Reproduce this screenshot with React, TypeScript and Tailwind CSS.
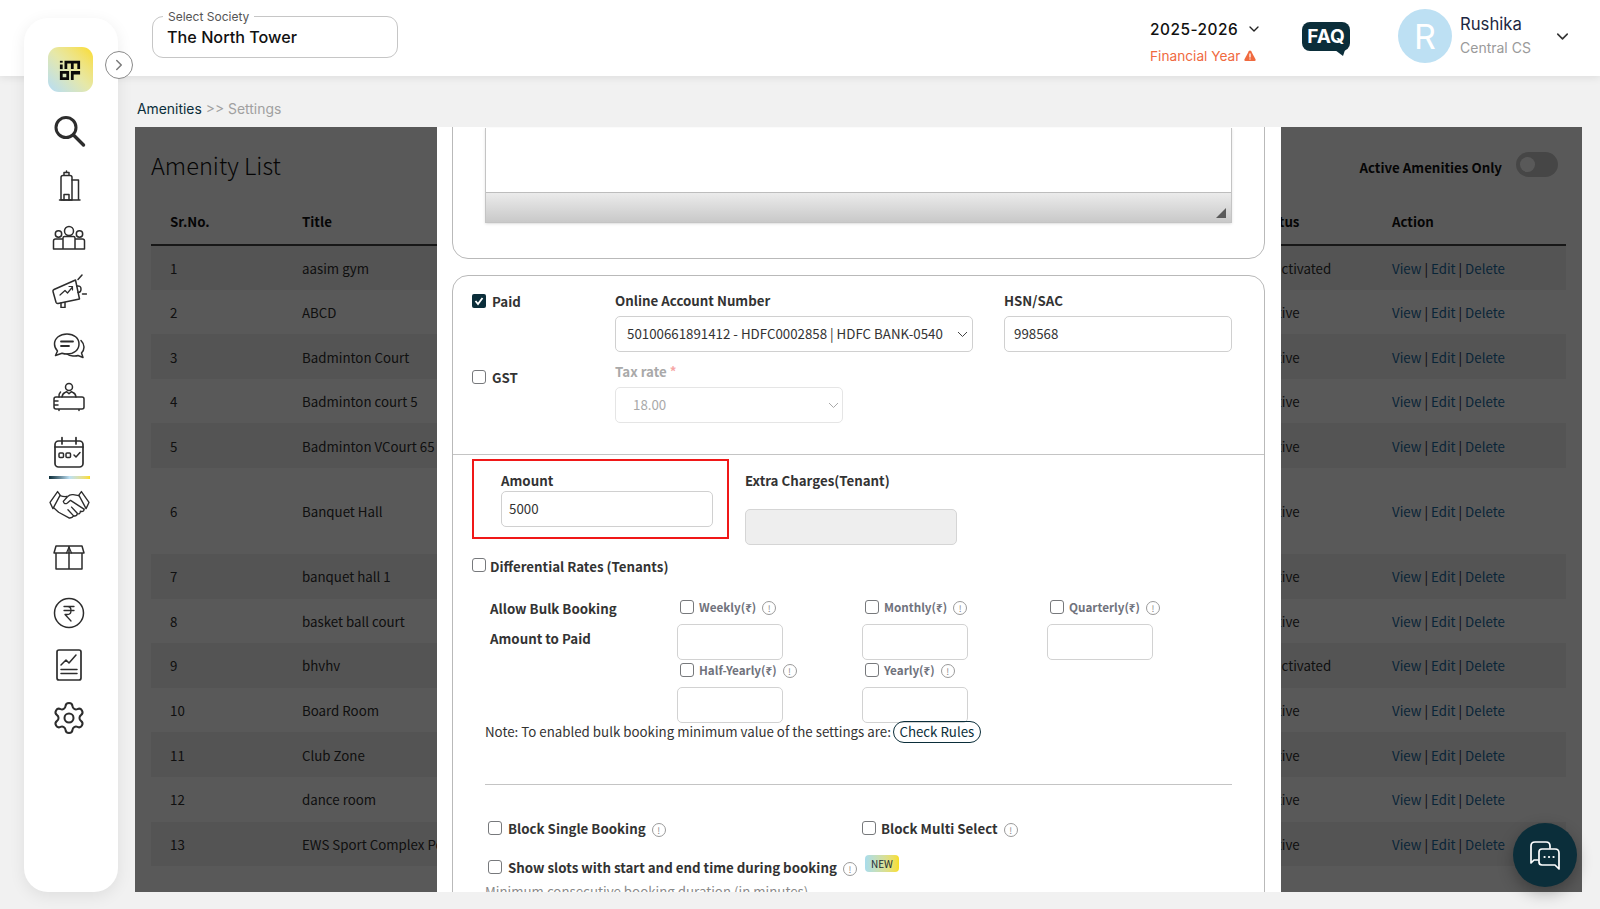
import React from "react";
import { ChevronDown, ChevronRight, Settings } from "lucide-react";

const noto = { fontFamily: '"Noto Sans CJK SC", "Noto Sans", sans-serif' };

const rows = [
  { id: 1, title: "aasim gym", status: "Inactivated" },
  { id: 2, title: "ABCD", status: "Active" },
  { id: 3, title: "Badminton Court", status: "Active" },
  { id: 4, title: "Badminton court 5", status: "Active" },
  { id: 5, title: "Badminton VCourt 65", status: "Active" },
  { id: 6, title: "Banquet Hall", status: "Active", tall: true },
  { id: 7, title: "banquet hall 1", status: "Active" },
  { id: 8, title: "basket ball court", status: "Active" },
  { id: 9, title: "bhvhv", status: "Inactivated" },
  { id: 10, title: "Board Room", status: "Active" },
  { id: 11, title: "Club Zone", status: "Active" },
  { id: 12, title: "dance room", status: "Active" },
  { id: 13, title: "EWS Sport Complex Pool", status: "Active" },
];

function Logo() {
  return (
    <div className="mr-[2px] flex h-[45px] w-[45px] items-center justify-center rounded-[11px] bg-gradient-to-tr from-[#b5dcf6] via-[#e6e8a8] to-[#fbdc14]">
      <svg width="22" height="22" viewBox="0 0 24 24" fill="#0a0a0a">
        <rect x="1" y="2" width="3" height="2" />
        <rect x="1" y="6" width="3" height="5" />
        <path d="M6 2h17v9h-3V5h-4v6h-3V5H9v6H6z" />
        <path d="M1 13h10v10H1zM4 16v4h4v-4z" fillRule="evenodd" />
        <path d="M13 13h10v4h-7v6h-3z" />
      </svg>
    </div>
  );
}

function NavSvg({ children, className = "" }: { children: React.ReactNode; className?: string }) {
  return (
    <svg className={className} width="36" height="36" viewBox="0 0 36 36" fill="none" stroke="#2d2d2d" strokeWidth="1.5" strokeLinecap="round" strokeLinejoin="round">
      {children}
    </svg>
  );
}

const navIcons: React.ReactNode[] = [
  <NavSvg key="search" className="-translate-y-[2px]">
    <circle cx="15" cy="14.5" r="10" strokeWidth="3" />
    <path d="M22.5 22l10 10" strokeWidth="3.4" />
  </NavSvg>,
  <NavSvg key="tower">
    <path d="M10 32V9.5q0-2 2-2h7q2 0 2 2V32z" />
    <path d="M21 12h6.5v20H21M8.5 32H29" />
    <path d="M13 7V4.5h5V7M15.5 4.500V3M13 32v-5.500h5V32" />
  </NavSvg>,
  <NavSvg key="people" className="translate-y-[1px]">
    <circle cx="18" cy="9" r="4.500" />
    <circle cx="7.500" cy="12" r="3.200" />
    <circle cx="28.500" cy="12" r="3.200" />
    <path d="M12 27v-11q0-1.500 1.500-1.500h9q1.500 0 1.500 1.500v11M2.500 27v-8q0-2 2-2H12M33.500 27v-8q0-2-2-2H24M2.500 27h31" />
  </NavSvg>,
  <NavSvg key="megaphone" className="-translate-y-[2px]">
    <path d="M3 17.500L24.500 8l4 19-21.500 4.500q-1.500.2-2-1.200L2 19.500q-.4-1.400 1-2z" />
    <path d="M9 23l5-4.500 2.500 2.500 5-6M18 14.500h3.500V18" strokeWidth="1.200" />
    <path d="M26 14q4-.5 4 3t-3 3.500M27 7.500L31 3M31.500 22h4" />
    <path d="M10 31v4.500h4V30.500" />
  </NavSvg>,
  <NavSvg key="chat" className="translate-y-[3px]">
    <path d="M16 4c7 0 12 4 12 10s-5 10-12 10q-2.500 0-5-.8L4.500 25.500l2-4.500Q3.500 18 3.500 14C3.500 8 9 4 16 4z" />
    <path d="M10 11.500h12M10 16h8" strokeWidth="1.800" />
    <path d="M30 10.500q3 3 3 6.500 0 3.500-2.500 6l1.500 4.500-5-2q-1.500.8-5 .5-4-.3-6-2" />
  </NavSvg>,
  <NavSvg key="desk" className="-translate-y-[1px]">
    <circle cx="18" cy="8" r="3.500" />
    <path d="M11 18q.5-3.500 3-4.500l1.800-.8 2.200 2 2.200-2 1.800.8q2.500 1 3 4.500M8 18q-.5-3 1.500-5" />
    <path d="M5 18h26q2 0 2 2v8q0 2-2 2H5q-2 0-2-2v-8q0-2 2-2zM3 22h4M3 26h4M8 30v1.500M28 30v1.500" />
  </NavSvg>,
  <NavSvg key="calendar" className="translate-y-[1px]">
    <rect x="4" y="7" width="28" height="26" rx="3.500" strokeWidth="1.700" />
    <path d="M11 3.500v6.500M25 3.500v6.500M4 13h28" strokeWidth="1.700" />
    <rect x="8" y="19" width="4.500" height="4.500" rx="1" />
    <rect x="15" y="19" width="4.500" height="4.500" rx="1" />
    <path d="M23 21l2 2 4-4.500" />
  </NavSvg>,
  <svg key="handshake" className="translate-y-[1px]" width="41" height="29" viewBox="0 0 39 28" fill="none" stroke="#2d2d2d" strokeWidth="1.300" strokeLinecap="round" strokeLinejoin="round">
    <path d="M0.700 12L8 1.500l2.500 3.500L3.500 18zM38.300 12L31 1.500l-2.500 3.500 7 13z" />
    <path d="M10.500 5.500q4 1.500 8 .5M28.500 5.500L23 4.500q-3-.5-5.500 2L13.500 11q1 3.500 4 1.500l3-2.500L33.500 18.500" />
    <path d="M4 17l5 4.500 10 5.500q3 .5 4.500-2M33.500 18.500q0 3-3.500 2q0 3-3 2.500q-.5 2.500-3.500 2" />
    <path d="M21.500 16.500l5.500 6M18 19l5.500 6" />
  </svg>,
  <NavSvg key="box">
    <path d="M3 14l2-7h26l2 7zM5 14v16h26V14M18 7v23" />
    <path d="M15.500 14L18 8l2.500 6" strokeWidth="1.200" />
  </NavSvg>,
  <NavSvg key="rupee" className="translate-y-[3px]">
    <circle cx="18" cy="18" r="14.500" />
    <path d="M13 11.500h10M13 15.500h10M13 11.500h3.500q3.500 0 3.500 4t-3.500 4H14l6 6.500" strokeWidth="1.300" />
  </NavSvg>,
  <NavSvg key="report" className="translate-y-[2px]">
    <rect x="6" y="3" width="24" height="30" rx="2" strokeWidth="1.700" />
    <path d="M10 18l5-5 3 3 7-8M10 22.500h16M10 26.500h16" />
  </NavSvg>,
  <Settings key="settings" className="translate-y-[2px]" size={36} color="#2d2d2d" strokeWidth={1.35} />,
];

function Info() {
  return (
    <span className="ml-[6px] mt-[2px] inline-flex h-[14px] w-[14px] shrink-0 items-center justify-center rounded-full border border-[#9a9a9a] text-[9px] font-normal leading-none text-[#8a8a8a]">
      !
    </span>
  );
}

function Box({ className = "" }: { className?: string }) {
  return <span className={`inline-block h-[14px] w-[14px] shrink-0 rounded-[3px] border border-[#77797c] bg-white ${className}`} />;
}

function Chevron({ color = "#444" }: { color?: string }) {
  return (
    <svg className="shrink-0" width="11" height="7" viewBox="0 0 11 7" fill="none" stroke={color} strokeWidth="1">
      <path d="M1 1l4.500 4.500L10 1" />
    </svg>
  );
}

function BulkCell({ label }: { label: string }) {
  return (
    <div className="w-[185px]">
      <div className="flex h-[20px] items-center pl-[3px] text-[11.700px] font-bold text-[#70727c]">
        <Box />
        <span className="ml-[5px]">{label}</span>
        <Info />
      </div>
      <div className="mt-[7px] h-[36px] w-[106px] rounded-[5px] border border-[#d2d2d2]" />
    </div>
  );
}

function AmenityTable() {
  return (
    <table className="w-full table-fixed border-collapse text-left text-[13.300px] text-[#2e2e2e]">
      <colgroup>
        <col className="w-[151px]" />
        <col className="w-[300px]" />
        <col />
        <col className="w-[134px]" />
        <col className="w-[174px]" />
      </colgroup>
      <thead>
        <tr className="h-[46px] border-b-2 border-[#444] text-[#111]">
          <th className="pl-[19px] font-bold">Sr.No.</th>
          <th className="font-bold">Title</th>
          <th className="font-bold">Description</th>
          <th className="font-bold">Status</th>
          <th className="font-bold">Action</th>
        </tr>
      </thead>
      <tbody className="[&_td]:pt-[2px]">
        {rows.map((r) => (
          <tr key={r.id} className={`${r.tall ? "h-[86px]" : "h-[44.600px]"} ${r.id % 2 === 1 ? "bg-[#f1f1f1]" : "bg-white"}`}>
            <td className="pl-[19px]">{r.id}</td>
            <td className="whitespace-nowrap">{r.title}</td>
            <td />
            <td className="pl-[4px]">{r.status}</td>
            <td className="text-[#1c6a9e]">
              View <span className="text-[#222]">|</span> Edit <span className="text-[#222]">|</span> Delete
            </td>
          </tr>
        ))}
      </tbody>
    </table>
  );
}

function SettingsModal() {
  return (
    <div className="absolute inset-0 flex justify-end bg-black/65 pr-[301px]">
      <div className="h-full w-[844px] overflow-hidden bg-white pl-[15px] pr-[16px] text-[13.300px] text-[#333]">
        {/* editor, already scrolled past its top */}
        <div className="-mt-[16px] h-[148px] rounded-[16px] border border-[#b9b9b9] px-[32px] pt-[16px]">
          <div className="flex h-[95px] flex-col border-x border-b border-[#c4c4c4] shadow-sm">
            <div className="flex-1 border-b border-[#bdbdbd]" />
            <div className="relative h-[29px] bg-gradient-to-b from-[#ebebeb] to-[#c9c9c9]">
              <svg className="absolute bottom-[4px] right-[5px]" width="10" height="10" viewBox="0 0 10 10">
                <path d="M10 0v10H0z" fill="#5a5a5a" />
              </svg>
            </div>
          </div>
        </div>

        <div className="mt-[16px] rounded-t-[16px] border border-[#b9b9b9] pb-[40px]">
          <div className="flex pl-[19px] pt-[15px]">
            <div className="mt-[1px] flex h-[20px] w-[143px] items-center">
              <span className="-mt-[3px] flex h-[14px] w-[14px] items-center justify-center rounded-[2px] bg-[#0b2e3a]">
                <svg width="10" height="10" viewBox="0 0 10 10" fill="none" stroke="#fff" strokeWidth="1.800">
                  <path d="M1.500 5l2.500 3 4.500-6" />
                </svg>
              </span>
              <span className="ml-[6px] font-bold">Paid</span>
            </div>
            <div className="w-[358px]">
              <div className="h-[20px] font-bold">Online Account Number</div>
              <div className="mt-[5px] flex h-[36px] items-center justify-between rounded-[5px] border border-[#d0d0d0] pl-[11px] pr-[4px]">
                <span className="whitespace-nowrap">50100661891412 - HDFC0002858 | HDFC BANK-0540</span>
                <Chevron />
              </div>
            </div>
            <div className="ml-[31px] w-[228px]">
              <div className="h-[20px] font-bold">HSN/SAC</div>
              <div className="mt-[5px] flex h-[36px] items-center rounded-[5px] border border-[#d0d0d0] pl-[9px]">998568</div>
            </div>
          </div>

          <div className="mt-[10px] flex pl-[19px]">
            <div className="mt-[6px] flex h-[20px] w-[143px] items-center">
              <Box className="-mt-[2px]" />
              <span className="ml-[6px] font-bold">GST</span>
            </div>
            <div className="w-[228px]">
              <div className="h-[20px] font-bold text-[#a9a9a9]">
                Tax rate <span className="text-[#f6a5a5]">*</span>
              </div>
              <div className="mt-[5px] flex h-[36px] items-center justify-between rounded-[5px] border border-[#e5e5e5] pl-[17px] pr-[3px] text-[#a9a9a9]">
                18.00
                <Chevron color="#a9a9a9" />
              </div>
            </div>
          </div>

          <div className="mt-[31px] border-t border-[#c4c4c4]" />

          <div className="ml-[19px] mt-[4px] flex items-start">
            <div className="h-[80px] w-[257px] border-2 border-[#f01818] pl-[27px] pt-[10px]">
              <div className="h-[20px] font-bold">Amount</div>
              <div className="flex h-[36px] w-[212px] items-center rounded-[5px] border border-[#d0d0d0] pl-[7px]">5000</div>
            </div>
            <div className="ml-[16px] pt-[12px]">
              <div className="h-[20px] font-bold">Extra Charges(Tenant)</div>
              <div className="mt-[18px] h-[36px] w-[212px] rounded-[5px] border border-[#d5d5d5] bg-[#eeeeee]" />
            </div>
          </div>

          <div className="ml-[19px] mt-[12px] flex h-[20px] items-center">
            <Box className="-mt-[4px]" />
            <span className="ml-[4px] font-bold">Differential Rates (Tenants)</span>
          </div>

          <div className="ml-[37px] mt-[22px] flex">
            <div className="w-[187px] font-bold">
              <div className="h-[20px]">Allow Bulk Booking</div>
              <div className="mt-[10px] h-[20px]">Amount to Paid</div>
            </div>
            <div className="-mt-[2px]">
              <div className="flex">
                <BulkCell label="Weekly(₹)" />
                <BulkCell label="Monthly(₹)" />
                <BulkCell label="Quarterly(₹)" />
              </div>
              <div className="flex">
                <BulkCell label="Half-Yearly(₹)" />
                <BulkCell label="Yearly(₹)" />
              </div>
            </div>
          </div>

          <div className="mx-[32px] -mt-[2px] flex h-[22px] items-center whitespace-nowrap">
            Note: To enabled bulk booking minimum value of the settings are:
            <span className="ml-[2px] flex h-[22px] w-[88px] items-center justify-center rounded-full border border-[#0b2e3a] text-[#0b2e3a]">Check Rules</span>
          </div>

          <div className="mx-[32px] mt-[41px] border-t border-[#c4c4c4]" />

          <div className="ml-[35px] mt-[34px] flex h-[20px] items-center font-bold">
            <div className="flex w-[374px] items-center">
              <Box className="-mt-[3px]" />
              <span className="ml-[6px]">Block Single Booking</span>
              <Info />
            </div>
            <div className="flex items-center">
              <Box className="-mt-[3px]" />
              <span className="ml-[5px]">Block Multi Select</span>
              <Info />
            </div>
          </div>

          <div className="ml-[35px] mt-[19px] flex h-[20px] items-center font-bold">
            <Box className="-mt-[3px]" />
            <span className="ml-[6px]">Show slots with start and end time during booking</span>
            <Info />
            <span className="-mt-[9px] ml-[8px] flex h-[17px] w-[34px] items-center justify-center rounded-[4px] bg-gradient-to-r from-[#a9dcec] to-[#f8de1a] text-[10px] font-normal text-[#1c2b33]">NEW</span>
          </div>

          <div className="mx-[32px] mt-[4px] text-[#8a8a8a]">Minimum consecutive booking duration (in minutes)</div>
        </div>
      </div>
    </div>
  );
}

export default function App() {
  return (
    <div className="relative h-[909px] w-full overflow-hidden bg-[#f1f1f1]" style={noto}>
      <header className="flex h-[76px] items-center bg-white pl-[152px] pr-[28px] shadow-[0_2px_8px_rgba(0,0,0,0.08)]" style={{ fontFamily: "Inter, sans-serif" }}>
        <div className="relative -mt-[2px] h-[42px] w-[246px] rounded-[11px] border border-[#c6c6c6] pl-[14px] pt-[9px] text-[16.200px] font-medium leading-[22px] text-[#111]">
          <span className="absolute -top-[8px] left-[10px] bg-white px-[5px] text-[12px] font-normal leading-[15px] text-[#555]">Select Society</span>
          The North Tower
        </div>

        <div className="ml-auto flex w-[130px] flex-col whitespace-nowrap pt-[8px]">
          <div className="flex items-center text-[15.400px] font-medium tracking-[0.5px] text-[#111]">
            2025-2026
            <ChevronDown className="ml-[8px] shrink-0" size={16} strokeWidth={2} color="#222" />
          </div>
          <div className="mt-[5px] flex items-center text-[13.700px] text-[#f06a3f]">
            Financial Year
            <svg className="ml-[4px] shrink-0" width="12" height="12" viewBox="0 0 12 12">
              <path d="M6 .5q.8 0 1.200.7l4.300 8q.7 1.600-1 1.800h-9q-1.700-.2-1-1.800l4.300-8Q5.200.5 6 .5z" fill="#f06a3f" />
              <path d="M6 3.500v4M6 8.500v1" stroke="#fff" strokeWidth="1.300" />
            </svg>
          </div>
        </div>

        <div className="relative ml-[22px] mt-[2px] h-[34px] w-[48px]">
          <div className="flex h-[29px] w-[48px] items-center justify-center rounded-[8px] bg-[#0b2e3a] text-[19px] font-bold leading-none text-white">FAQ</div>
          <svg className="absolute bottom-0 right-[5px]" width="10" height="6" viewBox="0 0 10 6">
            <path d="M0 0h10L8 6z" fill="#0b2e3a" />
          </svg>
        </div>

        <div className="-mt-[4px] ml-[48px] flex h-[54px] w-[54px] items-center justify-center rounded-full bg-[#bde0f3] text-[34px] text-white">R</div>
        <div className="-mt-[6px] ml-[8px] w-[93px]">
          <div className="text-[16.700px] leading-[22px] text-[#1d2742]">Rushika</div>
          <div className="mt-[3px] text-[14px] leading-[20px] text-[#9a9a9a]">Central CS</div>
        </div>
        <ChevronDown className="-mt-[3px] shrink-0" size={19} strokeWidth={2} color="#333" />
      </header>

      <aside className="absolute left-[24px] top-[18px] flex h-[874px] w-[94px] flex-col items-center rounded-[24px] bg-white pt-[29px] shadow-[0_4px_16px_rgba(0,0,0,0.08)]">
        <Logo />
        <div className="mr-[4px] mt-[14px] flex flex-col items-center">
          {navIcons.map((icon, i) => (
            <div key={i} className={`relative flex h-[53px] w-[42px] items-center justify-center ${i === 6 ? "after:absolute after:bottom-[-2px] after:left-[1px] after:h-[3px] after:w-[41px] after:bg-gradient-to-r after:from-[#0b2e3a] after:via-[#bde0f3] after:to-[#fbdc14]" : ""}`}>
              {icon}
            </div>
          ))}
        </div>
        <button className="absolute -right-[15px] top-[33px] flex h-[28px] w-[28px] items-center justify-center rounded-full border border-[#8a8a8a] bg-white">
          <ChevronRight size={18} color="#7a7a7a" strokeWidth={2} />
        </button>
      </aside>

      <main className="pl-[135px] pr-[18px]">
        <div className="flex h-[51px] items-center pl-[2px] pt-[16px] text-[13.900px] text-[#a0a0a0]" style={{ fontFamily: "Inter, sans-serif" }}>
          <span className="text-[#0b2e3a]">Amenities</span>
          <span className="ml-[4px]">&gt;&gt; Settings</span>
        </div>
        <section className="relative h-[765px] overflow-hidden bg-white">
          <div className="px-[16px]">
            <div className="flex h-[72px] items-center text-[#111]">
              <h1 className="pt-[6px] text-[23.600px] font-light">Amenity List</h1>
              <div className="ml-auto flex items-center pr-[8px] pt-[6px] text-[13.300px] font-bold">
                <span className="pt-[3px]">Active Amenities Only</span>
                <span className="-mt-[4px] ml-[14px] flex h-[25px] w-[42px] items-center rounded-full bg-[#c9c9c9] pl-[4px]">
                  <span className="h-[15px] w-[15px] rounded-full bg-white" />
                </span>
              </div>
            </div>
            <AmenityTable />
          </div>
          <SettingsModal />
        </section>
      </main>

      <button className="absolute bottom-[22px] left-[1513px] flex h-[64px] w-[64px] items-center justify-center rounded-full bg-[#0b2e3a] shadow-[0_6px_16px_rgba(0,0,0,0.3)]">
        <svg width="34" height="34" viewBox="0 0 34 34" fill="none" stroke="#fff" strokeWidth="1.700" strokeLinejoin="round" strokeLinecap="round">
          <path d="M10 22H6l-3 3V8q0-4 4-4h11q4 0 4 4v2" />
          <path d="M14 11h13q4 0 4 4v16l-4-4H14q-3 0-3-3v-10q0-3 3-3z" />
          <path d="M16.500 19h.1M21 19h.1M25.500 19h.1" strokeWidth="2.200" />
        </svg>
      </button>
    </div>
  );
}
